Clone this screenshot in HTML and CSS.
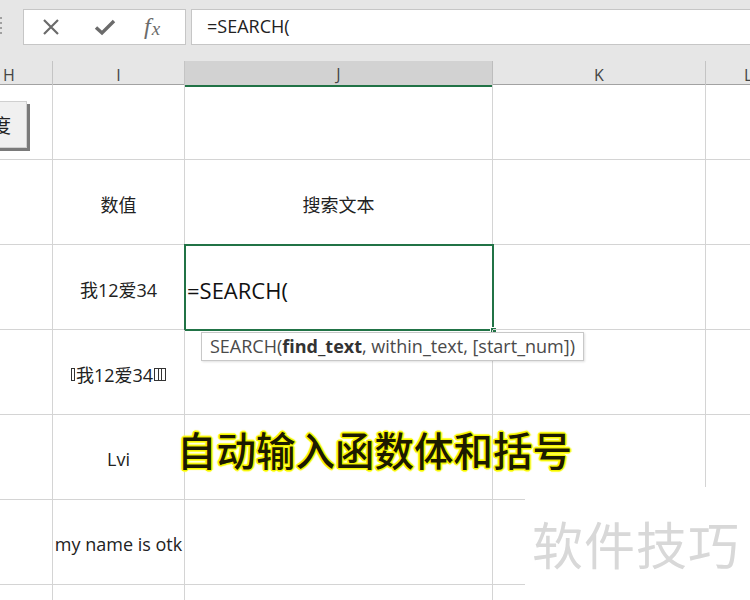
FILE: index.html
```html
<!DOCTYPE html>
<html lang="zh">
<head>
<meta charset="utf-8">
<title>SEARCH</title>
<link rel="stylesheet" href="styles.css">
</head>
<body>
<div class="app">
  <div class="toolbar">
    <div class="grip"><i></i><i></i><i></i><i></i></div>
    <div class="namebox">
      <svg class="ico" width="20" height="20" viewBox="0 0 20 20"><path d="M3 3 L17 17 M17 3 L3 17" stroke="#6b6b6b" stroke-width="2.2" fill="none"/></svg>
      <svg class="ico" width="22" height="20" viewBox="0 0 22 20"><path d="M2 10.5 L8 16 L20 4" stroke="#6b6b6b" stroke-width="3.4" fill="none" stroke-linejoin="miter"/></svg>
      <span class="fx">f<span class="fxx">x</span></span>
    </div>
    <div class="formula">=SEARCH(</div>
  </div>
  <div class="headers">
    <div class="hc ch">H</div>
    <div class="hc ci">I</div>
    <div class="hc cj sel">J</div>
    <div class="hc ck">K</div>
    <div class="hc cl">L</div>
  </div>
  <div class="sheet">
    <div class="c r1"><div class="btn">度</div></div>
    <div class="c r1"></div>
    <div class="c r1"></div>
    <div class="c r1"></div>
    <div class="c r1"></div>

    <div class="c"></div>
    <div class="c mid">数值</div>
    <div class="c mid">搜索文本</div>
    <div class="c"></div>
    <div class="c"></div>

    <div class="c"></div>
    <div class="c mid">我12爱34</div>
    <div class="c active">
      <span class="entry">=SEARCH(</span>
      <div class="cursor"><span class="handle"></span></div>
      <div class="tip">SEARCH(<b>find_text</b>, within_text, [start_num])</div>
    </div>
    <div class="c"></div>
    <div class="c"></div>

    <div class="c"></div>
    <div class="c mid"><span class="tofu"></span>我12爱34<span class="tofu wide"></span></div>
    <div class="c"></div>
    <div class="c"></div>
    <div class="c"></div>

    <div class="c"></div>
    <div class="c mid">Lvi</div>
    <div class="c"></div>
    <div class="c"></div>
    <div class="c"></div>

    <div class="c"></div>
    <div class="c mid over">my name is otk</div>
    <div class="c"></div>
    <div class="c"></div>
    <div class="c"></div>

    <div class="c"></div>
    <div class="c"></div>
    <div class="c"></div>
    <div class="c"></div>
    <div class="c"></div>
  </div>
  <div class="caption">自动输入函数体和括号</div>
  <div class="watermark">软件技巧</div>
</div>
</body>
</html>
```

FILE: styles.css
```css
* { box-sizing: border-box; }
html, body { margin: 0; padding: 0; background: #fff; }
body { width: 750px; height: 600px; overflow: hidden; font-family: "Open Sans", "Noto Sans CJK SC", sans-serif; color: #222; }
.app { position: relative; width: 750px; height: 600px; overflow: hidden; }

.toolbar { height: 61px; background: #e6e6e6; display: flex; align-items: flex-start; padding-top: 9px; }
.grip { width: 4px; height: 36px; display: flex; flex-direction: column; gap: 3px; padding-top: 8px; }
.grip i { display: block; width: 2px; height: 2px; background: #a0a0a0; }
.namebox { margin-left: 19px; width: 163px; height: 36px; background: #fff; border: 1px solid #c6c6c6; display: flex; align-items: center; padding-left: 17px; gap: 0; }
.namebox .ico { display: block; }
.namebox .ico:first-child { margin-right: 33px; }
.namebox .ico:nth-child(2) { margin-right: 28px; }
.fx { font-family: "Liberation Serif", serif; font-style: italic; font-size: 24px; color: #6b6b6b; line-height: 1; letter-spacing: 1px; padding-bottom: 3px; }
.fxx { font-size: 19px; position: relative; top: 1px; }
.formula { margin-left: 5px; flex: 1; height: 36px; background: #fff; border: 1px solid #c6c6c6; border-right: none; font-size: 18px; line-height: 33px; padding-left: 15px; color: #222; }

.headers { height: 24px; display: grid; grid-template-columns: 53px 132px 308px 213px 1fr; background: #e6e6e6; border-bottom: 1px solid #a2a2a2; }
.hc { border-right: 1px solid #c4c4c4; font-size: 16px; color: #444; display: flex; align-items: center; justify-content: center; padding-top: 2px; }
.hc.ch { justify-content: flex-start; padding-left: 3px; }
.hc.cl { justify-content: flex-start; padding-left: 38px; border-right: none; }
.hc.sel { background: #d2d2d2; border-bottom: 2px solid #217346; border-right-color: #bdbdbd; color: #444; }

.sheet { display: grid; grid-template-columns: 53px 132px 308px 213px 1fr; grid-template-rows: 75px repeat(6, 85px); }
.c { position: relative; border-right: 1px solid #d4d4d4; border-bottom: 1px solid #d4d4d4; font-size: 18px; color: #222; }
.c:nth-child(5n) { border-right: none; }
.mid { display: flex; align-items: center; justify-content: center; padding-top: 4px; white-space: nowrap; }
.over { overflow: visible; }

.btn { position: absolute; right: 25px; top: 16px; width: 60px; height: 47px; background: #f0f0f0; border: 1px solid #d0d0d0; box-shadow: 3px 3px 0 #7a7a7a; font-family: "Noto Sans CJK SC", sans-serif; font-size: 19px; color: #222; display: flex; align-items: center; justify-content: flex-end; padding-right: 15px; }

.active { display: flex; align-items: center; padding-top: 5px; }
.entry { font-size: 22px; padding-left: 2px; color: #111; }
.cursor { position: absolute; left: -1px; top: -1px; right: -2px; bottom: -2px; border: 2px solid #217346; }
.handle { position: absolute; right: -5px; bottom: -5px; width: 7px; height: 7px; background: #217346; border: 1px solid #fff; }
.tip { position: absolute; left: 16px; top: 87px; z-index: 3; background: #fff; border: 1px solid #c8c8c8; box-shadow: 1px 1px 2px rgba(0,0,0,0.12); font-size: 18px; color: #4a4a4a; padding: 1px 8px 2px 8px; white-space: nowrap; line-height: 24px; }
.tip b { color: #333; font-weight: 700; }

.tofu { display: inline-block; width: 4px; height: 13px; border: 1px solid #333; margin-right: 1px; }
.tofu.wide { width: 12px; margin-left: 1px; margin-right: 0; background: linear-gradient(90deg, transparent 3px, #333 3px, #333 4px, transparent 4px, transparent 6px, #333 6px, #333 7px, transparent 7px); }

.caption { position: absolute; left: 177px; top: 423px; z-index: 4; font-family: "Noto Sans CJK SC", sans-serif; font-weight: 500; font-size: 39.5px; line-height: 52px; color: #1c1a00; white-space: nowrap;
  text-shadow: 0 0 1px #ffff00, 1px 1px 0 #f4f400, -1px -1px 0 #f4f400, 1px -1px 0 #f4f400, -1px 1px 0 #f4f400, 2px 0 1px #ffff30, -2px 0 1px #ffff30, 0 2px 1px #ffff30, 0 -2px 1px #ffff30; }
.watermark { position: absolute; left: 525px; top: 487px; width: 225px; height: 113px; background: #fff; z-index: 2; font-family: "Noto Sans CJK SC", sans-serif; font-size: 51px; color: #d8d8d8; line-height: 113px; padding-left: 7px; white-space: nowrap; letter-spacing: 1px; }
```
